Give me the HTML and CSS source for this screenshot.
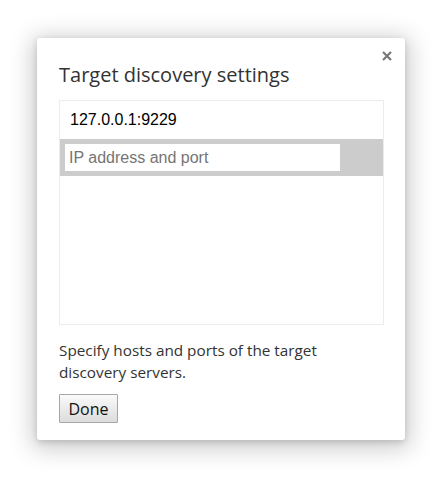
FILE: index.html
```html
<!DOCTYPE html>
<html>
<head>
<meta charset="utf-8">
<link rel="stylesheet" href="styles.css">
</head>
<body>
<div class="stage">
  <div class="dialog">
    <button class="close" aria-label="Close">
      <svg width="10" height="10" viewBox="0 0 10 10"><path d="M1 1L9 9M9 1L1 9" stroke="#777" stroke-width="2.2" stroke-linecap="butt"/></svg>
    </button>
    <div class="title">Target discovery settings</div>
    <div class="list">
      <div class="row">127.0.0.1:9229</div>
      <div class="row selected"><input class="field" type="text" placeholder="IP address and port"></div>
    </div>
    <div class="desc">Specify hosts and ports of the target discovery servers.</div>
    <div class="actions"><button class="done">Done</button></div>
  </div>
</div>
</body>
</html>
```

FILE: styles.css
```css
html, body { margin: 0; padding: 0; background: #fff; }
.stage { padding: 38px 0 44px 37px; }
.dialog {
  position: relative;
  box-sizing: border-box;
  width: 368px;
  height: 402px;
  background: #fff;
  border-radius: 3px;
  box-shadow: 0 4px 23px 5px rgba(0,0,0,0.2), 0 2px 6px rgba(0,0,0,0.15);
  padding: 22px 21px 0 22px;
  display: flex;
  flex-direction: column;
  font-family: "Open Sans", "Noto Sans", sans-serif;
  color: #333;
}
.close {
  position: absolute;
  top: 12px;
  right: 12px;
  width: 12px;
  height: 12px;
  padding: 0;
  border: 0;
  background: none;
  display: flex;
  align-items: center;
  justify-content: center;
}
.title {
  font-size: 20px;
  line-height: 30px;
  color: #333;
  height: 40px;
}
.list {
  box-sizing: border-box;
  width: 325px;
  height: 225px;
  border: 1px solid #ececec;
  display: flex;
  flex-direction: column;
  font-family: "Liberation Sans", Arial, sans-serif;
}
.row {
  height: 38px;
  box-sizing: border-box;
  padding-left: 10px;
  display: flex;
  align-items: center;
  font-size: 16px;
  color: #000;
}
.row.selected {
  background: #ccc;
  padding: 5px 0 5px 5px;
  height: 37px;
}
.field {
  box-sizing: border-box;
  width: 275px;
  height: 27px;
  border: 0;
  outline: none;
  background: #fff;
  padding: 0 0 0 4px;
  font-family: "Liberation Sans", Arial, sans-serif;
  font-size: 16px;
  color: #000;
}
.field::placeholder { color: #757575; }
.desc {
  margin-top: 14px;
  font-size: 15.3px;
  line-height: 22px;
  color: #333;
  width: 300px;
}
.actions { margin-top: 11px; }
.done {
  box-sizing: border-box;
  width: 59px;
  height: 29px;
  border: 1px solid #a6a6a6;
  border-radius: 1px;
  background: linear-gradient(#fafafa, #dcdcdc);
  font-family: "Open Sans", "Noto Sans", sans-serif;
  font-size: 16px;
  color: #111;
  padding: 0;
}
```
